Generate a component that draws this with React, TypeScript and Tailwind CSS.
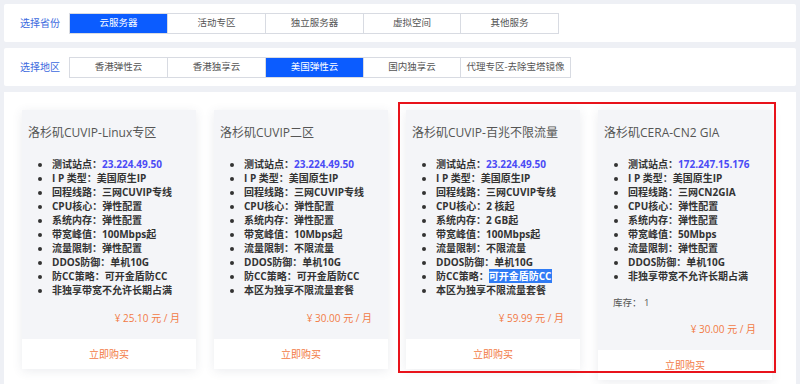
import type { ReactNode } from 'react';

const font = 'font-["Open_Sans","Noto_Sans_CJK_SC",sans-serif]';

const provinces = ['云服务器', '活动专区', '独立服务器', '虚拟空间', '其他服务'];
const regions = ['香港弹性云', '香港独享云', '美国弹性云', '国内独享云', '代理专区-去除宝塔镜像'];

interface Plan {
  title: string;
  ip: string;
  items: ReactNode[];
  stock?: string;
  price: string;
}

const plans: Plan[] = [
  {
    title: '洛杉矶CUVIP-Linux专区',
    ip: '23.224.49.50',
    items: [
      'I P 类型：美国原生IP',
      '回程线路：三网CUVIP专线',
      'CPU核心：弹性配置',
      '系统内存：弹性配置',
      '带宽峰值：100Mbps起',
      '流量限制：弹性配置',
      'DDOS防御：单机10G',
      '防CC策略：可开金盾防CC',
      '非独享带宽不允许长期占满',
    ],
    price: '¥ 25.10 元 / 月',
  },
  {
    title: '洛杉矶CUVIP二区',
    ip: '23.224.49.50',
    items: [
      'I P 类型：美国原生IP',
      '回程线路：三网CUVIP专线',
      'CPU核心：弹性配置',
      '系统内存：弹性配置',
      '带宽峰值：10Mbps起',
      '流量限制：不限流量',
      'DDOS防御：单机10G',
      '防CC策略：可开金盾防CC',
      '本区为独享不限流量套餐',
    ],
    price: '¥ 30.00 元 / 月',
  },
  {
    title: '洛杉矶CUVIP-百兆不限流量',
    ip: '23.224.49.50',
    items: [
      'I P 类型：美国原生IP',
      '回程线路：三网CUVIP专线',
      'CPU核心：2 核起',
      '系统内存：2 GB起',
      '带宽峰值：100Mbps起',
      '流量限制：不限流量',
      'DDOS防御：单机10G',
      <>
        防CC策略：<span className="bg-[#2f7bf5] text-white">可开金盾防CC</span>
      </>,
      '本区为独享不限流量套餐',
    ],
    price: '¥ 59.99 元 / 月',
  },
  {
    title: '洛杉矶CERA-CN2 GIA',
    ip: '172.247.15.176',
    items: [
      'I P 类型：美国原生IP',
      '回程线路：三网CN2GIA',
      'CPU核心：弹性配置',
      '系统内存：弹性配置',
      '带宽峰值：50Mbps',
      '流量限制：弹性配置',
      'DDOS防御：单机10G',
      '非独享带宽不允许长期占满',
    ],
    stock: '1',
    price: '¥ 30.00 元 / 月',
  },
];

function TabRow({ label, tabs, active, widths }: { label: string; tabs: string[]; active: number; widths: string[] }) {
  return (
    <div className="flex items-center h-[38px] bg-white mx-[4px] pl-[16px] rounded-[2px]">
      <span className="w-[49px] text-[10px] text-[#3d6ade]">{label}</span>
      <div className="flex">
        {tabs.map((t, i) => (
          <div
            key={t}
            className={`h-[21px] flex items-center justify-center text-[9.5px] border border-[#d8dbe2] -ml-px first:ml-0 ${widths[i]} ${
              i === active ? 'bg-[#0b5cff] border-[#0b5cff] text-white' : 'bg-white text-[#555]'
            }`}
          >
            {t}
          </div>
        ))}
      </div>
    </div>
  );
}

function PlanCard({ plan }: { plan: Plan }) {
  return (
    <div className="w-[174px] flex flex-col shadow-[0_2px_10px_rgba(60,70,100,0.10)]">
      <div className="bg-[#f4f5f8] px-[6px] pt-[15px] pb-[14px]">
        <div className="text-[12px] leading-[16px] text-[#555]">{plan.title}</div>
        <ul className="mt-[16px] pl-[24px] list-disc text-[10px] leading-[14px] font-bold text-[#333]">
          <li>
            测试站点：<span className="text-[#4b4bf5]">{plan.ip}</span>
          </li>
          {plan.items.map((it, i) => (
            <li key={i}>{it}</li>
          ))}
        </ul>
        {plan.stock && (
          <div className="mt-[13px] ml-[9px] text-[9.5px] leading-[14px] text-[#555]">库存： {plan.stock}</div>
        )}
        <div className={`${plan.stock ? 'mt-[12px]' : 'mt-[14px]'} pr-[10px] text-right text-[10px] leading-[14px] text-[#f27a45]`}>
          {plan.price}
        </div>
      </div>
      <div className="h-[30px] bg-white flex items-center justify-center text-[10px] text-[#f27a45]">立即购买</div>
    </div>
  );
}

export default function App() {
  return (
    <div className={`${font} w-[800px] h-[384px] overflow-hidden bg-[#eef0f5] pt-[4px]`}>
      <TabRow
        label="选择省份"
        tabs={provinces}
        active={0}
        widths={['w-[99px]', 'w-[99px]', 'w-[99px]', 'w-[98px]', 'w-[99px]']}
      />
      <div className="h-[6px]" />
      <TabRow
        label="选择地区"
        tabs={regions}
        active={2}
        widths={['w-[99px]', 'w-[99px]', 'w-[99px]', 'w-[98px]', 'w-[111px]']}
      />
      <div className="relative mt-[6px] mx-[4px] bg-white h-[300px] px-[18px] pt-[18px]">
        <div className="flex items-start gap-[18px]">
          {plans.map((p) => (
            <PlanCard key={p.title} plan={p} />
          ))}
        </div>
        {/* red annotation box */}
        <div className="absolute left-[394px] top-[10px] w-[378px] h-[271px] border-2 border-[#e8131b]" />
      </div>
    </div>
  );
}
